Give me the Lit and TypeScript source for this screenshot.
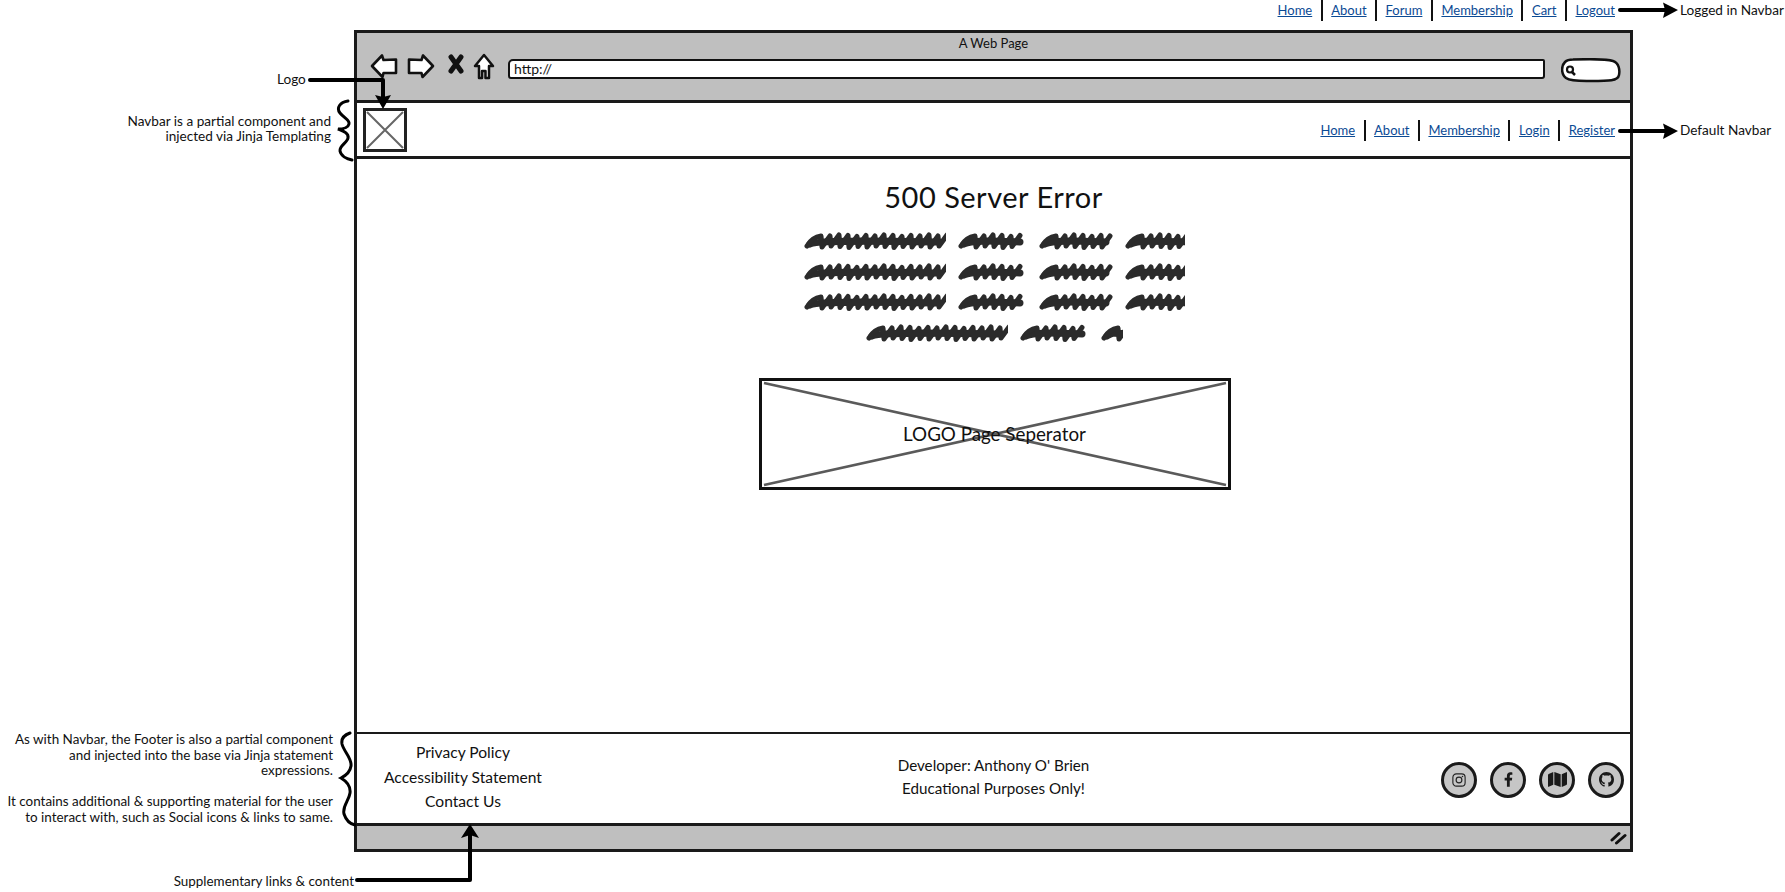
import { LitElement, css, html, svg } from 'lit';
import { customElement } from 'lit/decorators.js';

const topLinks = ['Home', 'About', 'Forum', 'Membership', 'Cart', 'Logout'];
const navLinks = ['Home', 'About', 'Membership', 'Login', 'Register'];

// word widths of the scribbled placeholder text, the last word of a row is cut off
const scribbleRows = [
	[143, 70, 75, 61],
	[143, 70, 75, 61],
	[143, 70, 75, 61],
	[143, 70, 23],
];

const bumps = [2, 0, 1, 3, 1, 2, 0, 1, 3, 1, 2, 0];

const scribble = (w: number, cut: boolean) => {
	const end = cut ? w + 6 : w - 7;
	const step = 9;
	let teeth = 'M4 15 C7 10 11 6 18 5';
	let x = 18;
	let i = 0;
	while (x < end) {
		const b = bumps[i % bumps.length];
		teeth += ` L${x + 1} ${15 + b / 2} L${x + step} ${4 + b / 2}`;
		x += step;
		i++;
	}
	return svg`
    <path d="M7 13 C14 9 ${w / 2} 10 ${end} 11" fill="none" stroke="#2b2b2b" stroke-width="7" stroke-linecap="round"/>
    <path d=${teeth} fill="none" stroke="#2b2b2b" stroke-width="5" stroke-linecap="round" stroke-linejoin="round"/>
  `;
};

@customElement('app-root')
export class AppRoot extends LitElement {
	static styles = css`
    :host {
      display: block;
      position: relative;
      width: 1785px;
      height: 892px;
      overflow: hidden;
      background: #fff;
      color: #111;
      font-family: Lato, "Liberation Sans", sans-serif;
      font-size: 14px;
    }

    .top {
      height: 30px;
      padding-right: 170px;
      box-sizing: border-box;
      display: flex;
      justify-content: flex-end;
      align-items: flex-start;
    }

    .links {
      display: flex;
      align-items: center;
      height: 21px;
    }

    .links a {
      color: #0b4a94;
      text-decoration: underline;
      font-size: 13px;
      padding: 0 8.5px;
      line-height: 21px;
      border-left: 2px solid #111;
    }

    .links a:first-child {
      border-left: none;
    }

    .links a:last-child {
      padding-right: 0;
    }

    .window {
      margin-left: 354px;
      width: 1279px;
      height: 822px;
      box-sizing: border-box;
      border: 3px solid #1a1a1a;
      display: grid;
      grid-template-rows: 67px 59px 1fr 91px 26px;
      background: #fff;
    }

    .chrome {
      background: #bfbfbf;
      display: flex;
      flex-direction: column;
      align-items: center;
      padding-top: 1px;
    }

    .title {
      font-size: 13px;
      line-height: 18px;
    }

    .toolbar {
      align-self: stretch;
      display: flex;
      align-items: flex-start;
      gap: 9px;
      padding: 1px 9px 0 13px;
    }

    .toolbar svg {
      display: block;
      flex: none;
    }

    .toolbar .stop {
      margin: 1px 0 0 4px;
    }

    .toolbar .search {
      margin-top: 5px;
    }

    .url {
      flex: 1;
      height: 16px;
      margin: 6px 7px 0 4px;
      padding-left: 4px;
      background: #fff;
      border: 2.5px solid #111;
      border-radius: 5px 2px 3px 3px;
      font-size: 14px;
      line-height: 16px;
    }

    .navbar {
      border-top: 3px solid #1a1a1a;
      border-bottom: 3px solid #1a1a1a;
      display: flex;
      align-items: center;
      justify-content: space-between;
      padding: 0 15px 0 6px;
    }

    .navbar .links {
      margin-top: 2px;
    }

    .logo {
      width: 44px;
      height: 44px;
      display: block;
    }

    .main {
      display: flex;
      flex-direction: column;
      align-items: center;
    }

    h1 {
      margin: 21px 0 17px;
      font-size: 29px;
      font-weight: 400;
      line-height: 34px;
      letter-spacing: 0.5px;
    }

    .scribble {
      display: flex;
      flex-direction: column;
      align-items: center;
      gap: 10.5px;
    }

    .scribble div {
      display: flex;
      gap: 11px;
      height: 20px;
    }

    .sep {
      position: relative;
      margin: 35px 0 0 2px;
      width: 472px;
      height: 112px;
      box-sizing: border-box;
      border: 3px solid #111;
      display: flex;
      align-items: center;
      justify-content: center;
      font-size: 18.8px;
    }

    .sep svg {
      position: absolute;
      inset: 0;
      width: 100%;
      height: 100%;
    }

    .sep span {
      position: relative;
    }

    .footer {
      border-top: 2.5px solid #1a1a1a;
      display: grid;
      grid-template-columns: 1fr 1fr 1fr;
      align-items: center;
      font-size: 15.2px;
    }

    .f-links {
      justify-self: start;
      margin: -4px 0 0 26px;
      width: 160px;
      display: flex;
      flex-direction: column;
      align-items: center;
      gap: 4.5px;
      font-size: 15.6px;
      line-height: 20px;
      white-space: nowrap;
    }

    .f-mid {
      text-align: center;
      line-height: 23px;
      margin-top: -4px;
    }

    .f-social {
      justify-self: end;
      display: flex;
      gap: 13px;
      padding: 2px 6px 0 0;
    }

    .f-social span {
      width: 36px;
      height: 36px;
      box-sizing: border-box;
      border-radius: 50%;
      border: 3px solid #1a1a1a;
      background: #c6c6c6;
      display: flex;
      align-items: center;
      justify-content: center;
    }

    .status {
      background: #bfbfbf;
      border-top: 3px solid #1a1a1a;
      display: flex;
      justify-content: flex-end;
      align-items: center;
      padding-right: 2px;
    }

    /* annotations sit on the free canvas around the window */
    .overlay {
      position: absolute;
      inset: 0;
      pointer-events: none;
    }

    .note {
      position: absolute;
      font-size: 13.6px;
      line-height: 15.5px;
      white-space: nowrap;
    }

    .right {
      text-align: right;
    }

    .n-logged { left: 1680px; top: 3px; }
    .n-default { left: 1680px; top: 123px; }
    .n-logo { left: 277px; top: 72px; }
    .n-navbar { right: 1454px; top: 114px; line-height: 15px; }
    .n-footer1 { right: 1452px; top: 732px; font-size: 13.45px; }
    .n-footer2 { right: 1452px; top: 794px; font-size: 13.45px; }
    .n-supp { right: 1431px; top: 874px; font-size: 13.45px; }
  `;

	private links(items: string[]) {
		return html`<nav class="links">${items.map(i => html`<a href="#">${i}</a>`)}</nav>`;
	}

	render() {
		return html`
      <div class="top">${this.links(topLinks)}</div>

      <div class="window">
        <div class="chrome">
          <div class="title">A Web Page</div>
          <div class="toolbar">
            <svg width="28" height="26" viewBox="0 0 28 26"><path d="M2 13 L12 2.5 L13.5 7 L26 6.5 L26 20 L13.5 20 L12.5 24 Z" fill="#fff" stroke="#111" stroke-width="2.6" stroke-linejoin="round"/></svg>
            <svg width="28" height="26" viewBox="0 0 28 26"><path d="M26 13 L16 2.5 L14.5 7 L2 6.5 L2 20 L14.5 20 L15.5 24 Z" fill="#fff" stroke="#111" stroke-width="2.6" stroke-linejoin="round"/></svg>
            <svg class="stop" width="16" height="20" viewBox="0 0 16 20"><path d="M3 3 L13 17 M13 3 L3 17" stroke="#111" stroke-width="5" stroke-linecap="round"/></svg>
            <svg width="22" height="27" viewBox="0 0 22 27"><path d="M11 2 L20 13 L16 13 L16 25 L12.5 25 L12.5 18 L9 18 L9 25 L6 25 L6 13 L2 13 Z" fill="#fff" stroke="#111" stroke-width="2.5" stroke-linejoin="round"/></svg>
            <div class="url">http://</div>
            <svg class="search" width="60" height="25" viewBox="0 0 60 25"><path d="M12 1.5 C28 1 46 1 52 3 C58 5 59 12 58 17 C57 23 48 23 30 23 C20 23 10 23.5 5 20 C0 16 0 8 4 4 C6 2 9 1.5 12 1.5 Z" fill="#fff" stroke="#111" stroke-width="2.5"/><circle cx="9" cy="11.5" r="3" fill="none" stroke="#111" stroke-width="2.2"/><path d="M11 14 L14 17" stroke="#111" stroke-width="2.5"/></svg>
          </div>
        </div>

        <div class="navbar">
          <svg class="logo" viewBox="0 0 44 44"><rect x="1.5" y="1.5" width="41" height="41" fill="#fff" stroke="#222" stroke-width="3"/><path d="M4 4 L40 40 M40 4 L4 40" stroke="#666" stroke-width="2"/></svg>
          ${this.links(navLinks)}
        </div>

        <div class="main">
          <h1>500 Server Error</h1>
          <div class="scribble">
            ${scribbleRows.map(r => html`<div>${r.map((w, i) => html`<svg width=${w} height="20" viewBox="0 0 ${w} 20">${scribble(w, i === r.length - 1)}</svg>`)}</div>`)}
          </div>
          <div class="sep">
            <svg viewBox="0 0 466 106" preserveAspectRatio="none"><path d="M2 2 L464 104 M464 2 L2 104" stroke="#5a5a5a" stroke-width="2.8"/></svg>
            <span>LOGO Page Seperator</span>
          </div>
        </div>

        <div class="footer">
          <div class="f-links">
            <div>Privacy Policy</div>
            <div>Accessibility Statement</div>
            <div>Contact Us</div>
          </div>
          <div class="f-mid">Developer: Anthony O' Brien<br />Educational Purposes Only!</div>
          <div class="f-social">
            <span><svg width="14" height="14" viewBox="0 0 16 16"><rect x="1" y="1" width="14" height="14" rx="4" fill="none" stroke="#222" stroke-width="1.3"/><circle cx="8" cy="8" r="3.3" fill="none" stroke="#222" stroke-width="1.3"/><circle cx="12" cy="4" r="0.9" fill="#222"/></svg></span>
            <span><svg width="9" height="15" viewBox="0 0 320 512"><path fill="#1a1a1a" d="M279.14 288l14.22-92.66h-88.91v-60.13c0-25.35 12.42-50.06 52.24-50.06h40.42V6.26S260.43 0 225.36 0c-73.22 0-121.08 44.38-121.08 124.72v70.62H22.89V288h81.39v224h100.17V288z"/></svg></span>
            <span><svg width="19" height="17" viewBox="0 0 576 512"><path fill="#1a1a1a" d="M0 117.66v346.32c0 11.32 11.43 19.06 21.94 14.86L160 416V32L20.12 87.95A32.006 32.006 0 0 0 0 117.66zM192 416l192 64V96L192 32v384zM554.06 33.16L416 96v384l139.88-55.95A31.996 31.996 0 0 0 576 394.34V48.02c0-11.32-11.43-19.06-21.94-14.86z"/></svg></span>
            <span><svg width="15" height="15" viewBox="0 0 16 16"><path fill="#1a1a1a" d="M8 0C3.58 0 0 3.58 0 8c0 3.54 2.29 6.53 5.47 7.59.4.07.55-.17.55-.38 0-.19-.01-.82-.01-1.49-2.01.37-2.53-.49-2.69-.94-.09-.23-.48-.94-.82-1.13-.28-.15-.68-.52-.01-.53.63-.01 1.08.58 1.23.82.72 1.21 1.87.87 2.33.66.07-.52.28-.87.51-1.07-1.78-.2-3.64-.89-3.64-3.95 0-.87.31-1.59.82-2.15-.08-.2-.36-1.02.08-2.12 0 0 .67-.21 2.2.82.64-.18 1.32-.27 2-.27.68 0 1.36.09 2 .27 1.53-1.04 2.2-.82 2.2-.82.44 1.1.16 1.92.08 2.12.51.56.82 1.27.82 2.15 0 3.07-1.87 3.75-3.65 3.95.29.25.54.73.54 1.48 0 1.07-.01 1.93-.01 2.2 0 .21.15.46.55.38A8.013 8.013 0 0016 8c0-4.42-3.58-8-8-8z"/></svg></span>
          </div>
        </div>

        <div class="status">
          <svg width="18" height="14" viewBox="0 0 18 14"><path d="M2 9 L9 2.5 M6.5 12 L15 4.5" stroke="#111" stroke-width="3" stroke-linecap="round"/></svg>
        </div>
      </div>

      <svg class="overlay" viewBox="0 0 1785 892">
        <g fill="none" stroke="#000" stroke-width="4" stroke-linecap="round" stroke-linejoin="round">
          <path d="M1620 10 H1666"/>
          <path d="M1620 131 H1666"/>
          <path d="M310 80 H383 V97"/>
          <path d="M357 880 H470 V835"/>
        </g>
        <g fill="#000">
          <path d="M1663 2.5 L1678 10 L1663 18 L1665 10 Z"/>
          <path d="M1663 123.5 L1678 131 L1663 139 L1665 131 Z"/>
          <path d="M375 95 L383 97 L391 95 L383 109 Z"/>
          <path d="M461 838 L470 835 L479 838 L470 824 Z"/>
        </g>
        <g fill="none" stroke="#000" stroke-width="3" stroke-linecap="round">
          <path d="M348 101 C340 102 336 108 340 113 C344 118 350 120 349 124 C348 128 342 129 338 129 C343 131 349 133 348 138 C347 143 339 146 340 151 C341 156 347 159 352 160"/>
          <path d="M350 733 C344 735 341 738 342 744 C344 752 352 758 351 766 C350 773 345 776 341 778 C346 781 351 785 350 793 C349 801 342 806 344 814 C346 820 350 824 355 825"/>
        </g>
      </svg>

      <div class="note n-logged">Logged in Navbar</div>
      <div class="note n-default">Default Navbar</div>
      <div class="note n-logo">Logo</div>
      <div class="note right n-navbar">Navbar is a partial component and<br />injected via Jinja Templating</div>
      <div class="note right n-footer1">As with Navbar, the Footer is also a partial component<br />and injected into the base via Jinja statement<br />expressions.</div>
      <div class="note right n-footer2">It contains additional &amp; supporting material for the user<br />to interact with, such as Social icons &amp; links to same.</div>
      <div class="note n-supp">Supplementary links &amp; content</div>
    `;
	}
}
